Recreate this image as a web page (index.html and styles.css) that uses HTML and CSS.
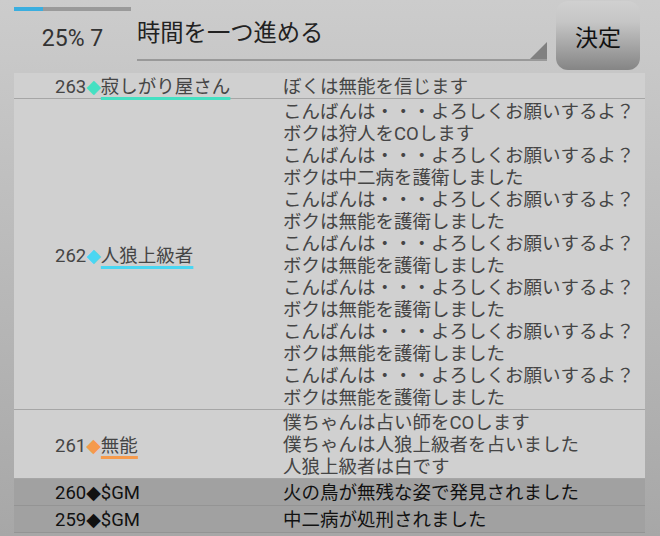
FILE: index.html
```html
<!DOCTYPE html>
<html lang="ja">
<head>
  <meta charset="UTF-8">
  <meta name="viewport" content="width=device-width, initial-scale=1.0">
  <title>村ログ</title>
  <link rel="stylesheet" href="styles.css">
</head>
<body>

  <div class="top-bar">
    <div class="progress-box">
      <div class="progress"><div class="progress-fill"></div></div>
      <div class="progress-text">25% 7</div>
    </div>
    <div class="spinner">時間を一つ進める</div>
    <button class="decide">決定</button>
  </div>

  <div class="log">
    <div class="log-row">
      <div class="who">263<span class="mark mint">◆</span><span class="name mint">寂しがり屋さん</span></div>
      <div class="msg">ぼくは無能を信じます</div>
    </div>
    <div class="log-row">
      <div class="who">262<span class="mark cyan">◆</span><span class="name cyan">人狼上級者</span></div>
      <div class="msg">
        こんばんは・・・よろしくお願いするよ？<br>
        ボクは狩人をCOします<br>
        こんばんは・・・よろしくお願いするよ？<br>
        ボクは中二病を護衛しました<br>
        こんばんは・・・よろしくお願いするよ？<br>
        ボクは無能を護衛しました<br>
        こんばんは・・・よろしくお願いするよ？<br>
        ボクは無能を護衛しました<br>
        こんばんは・・・よろしくお願いするよ？<br>
        ボクは無能を護衛しました<br>
        こんばんは・・・よろしくお願いするよ？<br>
        ボクは無能を護衛しました<br>
        こんばんは・・・よろしくお願いするよ？<br>
        ボクは無能を護衛しました
      </div>
    </div>
    <div class="log-row">
      <div class="who">261<span class="mark orange">◆</span><span class="name orange">無能</span></div>
      <div class="msg">
        僕ちゃんは占い師をCOします<br>
        僕ちゃんは人狼上級者を占いました<br>
        人狼上級者は白です
      </div>
    </div>
    <div class="log-row gm">
      <div class="who">260<span class="mark">◆</span>$GM</div>
      <div class="msg">火の鳥が無残な姿で発見されました</div>
    </div>
    <div class="log-row gm">
      <div class="who">259<span class="mark">◆</span>$GM</div>
      <div class="msg">中二病が処刑されました</div>
    </div>
  </div>

</body>
</html>
```

FILE: styles.css
```css
body {
  margin: 0;
  padding: 0;
  font-family: Roboto, "Noto Sans CJK JP", sans-serif;
  background: linear-gradient(#cccccc, #a7a7a7);
  min-height: 536px;
  color: #333;
  overflow: hidden;
}

/* top bar */
.top-bar {
  display: flex;
  height: 72px;
  padding-left: 14px;
}

.progress-box {
  width: 117px;
}

.progress {
  margin-top: 7px;
  height: 4px;
  background-color: #9a9a9a;
}

.progress-fill {
  width: 29px;
  height: 4px;
  background-color: #3aaedf;
}

.progress-text {
  margin-top: 15px;
  text-align: center;
  font-size: 23px;
  line-height: 26px;
  color: #333;
}

.spinner {
  position: relative;
  margin-left: 6px;
  width: 410px;
  height: 56px;
  padding-top: 3px;
  border-bottom: 2px solid #999;
  display: flex;
  align-items: center;
  font-size: 23.3px;
  color: #222;
}

.spinner::after {
  content: "";
  position: absolute;
  right: 0;
  bottom: 0;
  border-style: solid;
  border-width: 0 0 17px 17px;
  border-color: transparent transparent #808080 transparent;
}

.decide {
  margin: 1px 0 0 9px;
  width: 84px;
  height: 69px;
  border: none;
  border-radius: 12px;
  background: linear-gradient(#d0d0d0 0%, #c6c6c6 30%, #858585 100%);
  font-family: inherit;
  font-size: 23px;
  color: #111;
  padding: 0;
}

/* log list */
.log {
  margin: 1px 15px 0 14px;
}

.log-row {
  display: grid;
  grid-template-columns: 269px 1fr;
  align-items: center;
  padding: 2px 0 0;
  background-color: #d0d0d0;
  border-bottom: 1px solid #a6a6a6;
  font-size: 18.5px;
  line-height: 22px;
  color: #454545;
}

.log-row.gm {
  padding: 2px 0 1px;
  background-color: #a1a1a1;
  border-bottom-color: #949494;
  color: #111;
}

.who {
  padding-left: 41px;
  white-space: nowrap;
}

.mark {
  font-family: "DejaVu Sans", sans-serif;
  font-size: 19px;
}

.name {
  text-decoration: underline;
  text-decoration-thickness: 3px;
  text-underline-offset: 4px;
}

.mint { color: #45e0c2; }
.name.mint { color: #454545; text-decoration-color: #45e0c2; }

.cyan { color: #4ad6f2; }
.name.cyan { color: #454545; text-decoration-color: #4ad6f2; }

.orange { color: #f59a4c; }
.name.orange { color: #454545; text-decoration-color: #f59a4c; }
```
